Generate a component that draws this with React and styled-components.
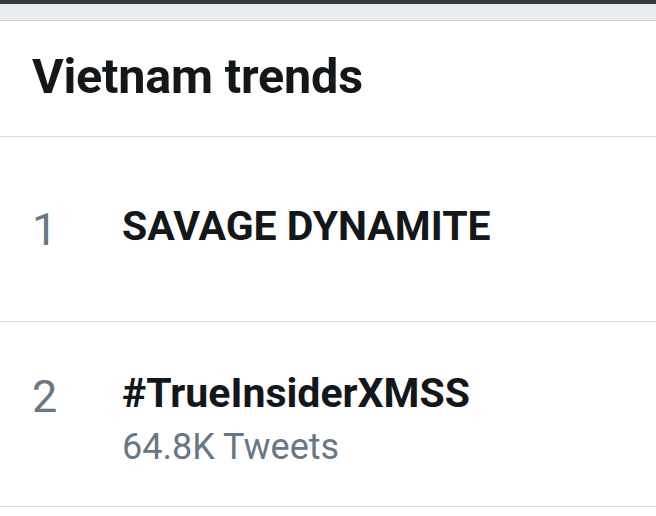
import styled, { createGlobalStyle } from 'styled-components';

const Global = createGlobalStyle`
html, body {
  margin: 0;
  padding: 0;
  background: #ffffff;
}
body {
  font-family: Roboto, "Liberation Sans", Arial, sans-serif;
  color: #14171a;
}
`

const Page = styled.div`
display: flex;
flex-direction: column;
width: 656px;
height: 516px;
overflow: hidden;
background: #fff;
`

const StatusBar = styled.div`
height: 4px;
background: #333d42;
`

const Band = styled.div`
height: 16px;
background: #e6ecef;
border-bottom: 1px solid #cfd6db;
`

const Header = styled.div`
display: flex;
align-items: center;
height: 116px;
padding: 0 32px;
border-bottom: 1px solid #d8dcdf;
box-sizing: border-box;
`

const Title = styled.h1`
margin: 0;
font-size: 48.5px;
font-weight: 700;
letter-spacing: -0.2px;
line-height: 1;
padding-bottom: 2px;
`

const Row = styled.div`
display: flex;
align-items: center;
height: 185px;
padding: ${p => (p.$sub ? '9px' : '0')} 32px 0;
border-bottom: 1px solid #d8dcdf;
box-sizing: border-box;
`

const Item = styled.div`
display: flex;
align-items: flex-start;
`

const Rank = styled.div`
width: 90px;
flex-shrink: 0;
font-size: 45px;
line-height: 1;
color: #687785;
margin-top: 1px;
`

const Body = styled.div`
display: flex;
flex-direction: column;
gap: 15px;
`

const Name = styled.div`
font-size: 41px;
font-weight: 700;
line-height: 1;
`

const Count = styled.div`
font-size: 36px;
line-height: 1;
color: #687785;
`

const trends = [
  { rank: 1, name: 'SAVAGE DYNAMITE' },
  { rank: 2, name: '#TrueInsiderXMSS', count: '64.8K Tweets' },
]

export default function App() {
  return (
    <>
      <Global />
      <Page>
        <StatusBar />
        <Band />
        <Header>
          <Title>Vietnam trends</Title>
        </Header>
        {trends.map(t => (
          <Row key={t.rank} $sub={!!t.count}>
            <Item>
              <Rank>{t.rank}</Rank>
              <Body>
                <Name>{t.name}</Name>
                {t.count && <Count>{t.count}</Count>}
              </Body>
            </Item>
          </Row>
        ))}
      </Page>
    </>
  )
}
